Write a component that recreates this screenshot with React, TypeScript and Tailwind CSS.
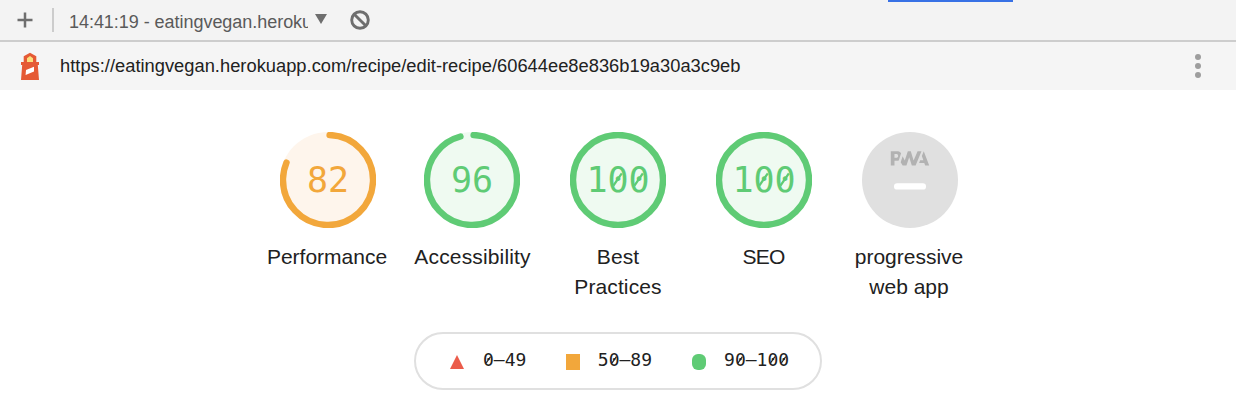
import React from "react";

type Tone = "average" | "pass";

const tones: Record<Tone, { ring: string; fill: string; text: string }> = {
  average: { ring: "stroke-[#f2a73b]", fill: "fill-[#fef5ec]", text: "text-[#f2a73b]" },
  pass: { ring: "stroke-[#5fcb75]", fill: "fill-[#effaf1]", text: "text-[#5fcb75]" },
};

const CIRCUMFERENCE = 2 * Math.PI * 45;

/** Monospace number with a stroke laid across every zero. */
function Digits({ value, className }: { value: string; className: string }) {
  return (
    <span className={`relative block whitespace-nowrap font-['DejaVu_Sans_Mono',monospace] ${className}`}>
      {value}
      <svg
        viewBox={`0 0 ${value.length * 60.2} 100`}
        preserveAspectRatio="none"
        className="absolute left-0 top-1/2 h-[1em] w-full -translate-y-1/2 fill-none stroke-current"
        strokeWidth="6.5"
      >
        {value.split("").map((char, i) =>
          char === "0" ? <path key={i} d={`M${i * 60.2 + 18} 66L${i * 60.2 + 42} 31`} /> : null
        )}
      </svg>
    </span>
  );
}

function Label({ lines, spacing }: { lines: string[]; spacing: string }) {
  return (
    <div className={`mt-[14px] text-center text-[21px] leading-[30px] text-[#212121] ${spacing}`}>
      {lines.map((line) => (
        <div key={line} className="whitespace-nowrap">{line}</div>
      ))}
    </div>
  );
}

interface GaugeProps {
  score: number;
  tone: Tone;
  arc: number;
  lines: string[];
  width: string;
  spacing: string;
}

function Gauge({ score, tone, arc, lines, width, spacing }: GaugeProps) {
  const t = tones[tone];
  return (
    <div className={`flex flex-col items-center ${width}`}>
      <div className="grid size-24 place-items-center">
        <svg viewBox="0 0 96 96" className="col-start-1 row-start-1 size-24">
          <circle cx="48" cy="48" r="48" className={t.fill} />
          {score === 100 ? (
            <circle cx="48" cy="48" r="45" fill="none" strokeWidth="6.4" className={t.ring} />
          ) : (
            <circle
              cx="48"
              cy="48"
              r="45"
              fill="none"
              strokeWidth="6.4"
              strokeLinecap="round"
              strokeDasharray={`${arc} ${CIRCUMFERENCE}`}
              transform="rotate(-88 48 48)"
              className={t.ring}
            />
          )}
        </svg>
        <Digits value={String(score)} className={`col-start-1 row-start-1 text-[35px] leading-[48px] ${t.text}`} />
      </div>
      <Label lines={lines} spacing={spacing} />
    </div>
  );
}

function PwaBadge() {
  return (
    <div className="flex w-[146px] flex-col items-center">
      <svg viewBox="0 0 60 60" className="size-24">
        <circle cx="30" cy="30" r="30" fill="#e0e0e0" />
        <g fill="#b2b2b2">
          <path d="M35.66 19.39l.7-1.75h2L37.4 15 38.6 12l3.4 9h-2.51l-.58-1.61z" />
          <path d="M33.52 21l3.65-9h-2.42l-2.5 5.82L30.5 12h-1.86l-1.9 5.82-1.35-2.65-1.21 3.72L25.4 21h2.38l1.72-5.2 1.64 5.2z" />
          <path fillRule="evenodd" d="M20.3 17.91h1.48c.45 0 .85-.05 1.2-.15l.39-1.18 1.07-3.3a2.64 2.64 0 0 0-.28-.37c-.55-.6-1.36-.91-2.42-.91H18v9h2.3V17.9zm1.96-3.84c.22.22.33.5.33.87 0 .36-.1.65-.29.87-.2.23-.59.35-1.15.35h-.86v-2.41h.87c.52 0 .89.1 1.1.32z" />
        </g>
        <rect x="20" y="32" width="20" height="4" rx="2" fill="#fff" />
      </svg>
      <Label lines={["progressive", "web app"]} spacing="pr-[2px] tracking-normal" />
    </div>
  );
}

export default function App() {
  return (
    <div className="h-[418px] w-[1236px] overflow-hidden bg-white font-['Liberation_Sans',Arial,sans-serif]">
      <div className="relative flex h-[42px] items-center border-b-2 border-[#cdcdcd] bg-[#f3f3f3]">
        <div className="absolute left-[888px] top-0 h-[2px] w-[125px] bg-[#3871e5]" />
        <svg viewBox="0 0 16 16" className="ml-[17px] size-4 stroke-[#6e6e6e]" strokeWidth="2.5">
          <path d="M0.5 8h15M8 0.5v15" />
        </svg>
        <div className="ml-[19px] h-6 w-[2px] bg-[#cccccc]" />
        <div className="ml-[15px] mt-[3px] w-[239px] overflow-hidden whitespace-nowrap text-[18px] leading-6 tracking-[-0.04px] text-[#5a5a5a]">
          14:41:19 - eatingvegan.heroku
        </div>
        <svg viewBox="0 0 12 10" className="mb-[2px] ml-[7px] h-[10px] w-3 fill-[#6e6e6e]">
          <path d="M0 0h12L6 10z" />
        </svg>
        <svg viewBox="0 0 20 20" className="ml-[23px] size-5 fill-none stroke-[#6e6e6e]" strokeWidth="2.9">
          <circle cx="10" cy="10" r="8.3" />
          <path d="M4.2 4.2l11.6 11.6" />
        </svg>
      </div>

      <div className="flex h-12 items-center bg-[#f5f5f5]">
        <svg viewBox="0 0 18 28" className="ml-[21px] h-7 w-[18px]">
          <path d="M9 0.7L15.3 4.3V10H18v3h-1.2L18 28H0L1.2 13H0v-3h2.7V4.3z" fill="#e55a35" />
          <path d="M6 10V6.2L9 4l3 2.2V10z" fill="#fbdf7c" />
          <path d="M5 18l8-3.3V19.6L4.6 23z" fill="#fff" />
        </svg>
        <div className="ml-[21px] flex-1 whitespace-nowrap text-[18.3px] leading-6 tracking-[0.02px] text-[#212121]">
          https://eatingvegan.herokuapp.com/recipe/edit-recipe/60644ee8e836b19a30a3c9eb
        </div>
        <svg viewBox="0 0 6 24" className="mr-[35px] h-6 w-[6px] fill-[#9e9e9e]">
          <circle cx="3" cy="3" r="3" />
          <circle cx="3" cy="12" r="3" />
          <circle cx="3" cy="21" r="3" />
        </svg>
      </div>

      <div className="flex h-[242px] pl-[257px] pt-[42px]">
        <Gauge score={82} tone="average" arc={228} lines={["Performance"]} width="w-[142px]" spacing="pr-[2px] tracking-normal" />
        <Gauge score={96} tone="pass" arc={269} lines={["Accessibility"]} width="w-[146px]" spacing="pl-px tracking-[0.15px]" />
        <Gauge score={100} tone="pass" arc={283} lines={["Best", "Practices"]} width="w-[146px]" spacing="tracking-[0.1px]" />
        <Gauge score={100} tone="pass" arc={283} lines={["SEO"]} width="w-[146px]" spacing="pr-px tracking-[-0.7px]" />
        <PwaBadge />
      </div>

      <div className="ml-[414px] flex h-[58px] w-[408px] items-center rounded-full border-2 border-[#e0e0e0] pl-[34px] text-[18px] leading-6 text-[#212121]">
        <svg viewBox="0 0 14 14" className="mt-[2px] h-[14px] w-[14px] fill-[#eb5c4b]">
          <path d="M7 0l7 14H0z" />
        </svg>
        <Digits value="0–49" className="mb-[2px] ml-[19px]" />
        <div className="ml-[39.5px] mt-[2px] h-4 w-[14px] bg-[#f2a73b]" />
        <Digits value="50–89" className="mb-[2px] ml-[18px]" />
        <div className="ml-[39.5px] mt-[2px] h-4 w-[14px] rounded-[6px] bg-[#5fcb75]" />
        <Digits value="90–100" className="mb-[2px] ml-[18.5px]" />
      </div>
    </div>
  );
}
